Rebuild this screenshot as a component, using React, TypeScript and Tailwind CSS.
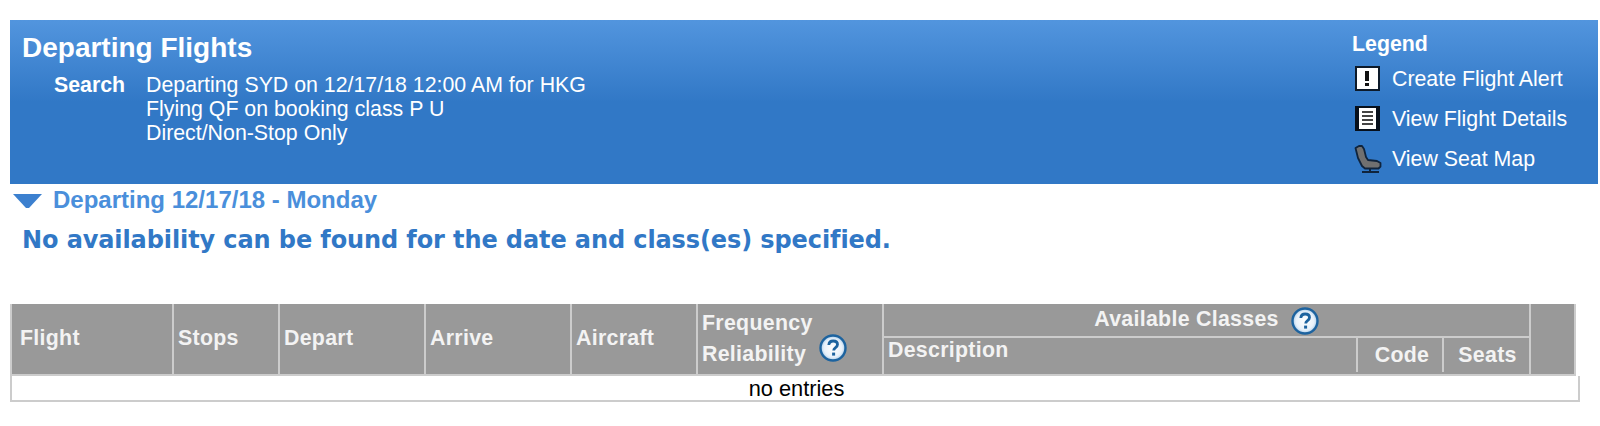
import React from "react";

const Help = ({ className = "" }: { className?: string }) => (
  <svg width="28" height="28" viewBox="0 0 28 28" className={className}>
    <defs>
      <radialGradient id="qh" cx="50%" cy="50%" r="50%">
        <stop offset="0%" stopColor="#ffffff" />
        <stop offset="72%" stopColor="#e8f1fa" />
        <stop offset="100%" stopColor="#a9cbe9" />
      </radialGradient>
    </defs>
    <circle cx="14" cy="14" r="12.5" fill="url(#qh)" stroke="#1d639f" strokeWidth="2.4" />
    <path d="M9.8 11c.2-2.7 2-4 4.4-4 2.500 0 4.300 1.400 4.300 3.600 0 1.700-1 2.500-2.200 3.300-1.100.8-1.600 1.300-1.600 2.600" fill="none" stroke="#1d639f" strokeWidth="2.800" />
    <rect x="13.100" y="18.600" width="3" height="3" fill="#1d639f" />
  </svg>
);

const AlertIcon = () => (
  <svg width="26" height="26" viewBox="0 0 26 26" shapeRendering="crispEdges">
    <rect x="1" y="0" width="25" height="25" fill="#0d1a2a" />
    <rect x="3" y="2" width="21" height="21" fill="#ffffff" />
    <rect x="11" y="5" width="4" height="10" fill="#111111" />
    <rect x="11" y="17" width="4" height="3" fill="#111111" />
  </svg>
);

const DetailsIcon = () => (
  <svg width="26" height="26" viewBox="0 0 26 26" shapeRendering="crispEdges">
    <rect x="1" y="0" width="25" height="25" fill="#07101c" />
    <rect x="5" y="2" width="17" height="21" fill="#ffffff" />
    <rect x="8" y="5" width="11" height="2" fill="#444444" />
    <rect x="8" y="9" width="11" height="2" fill="#444444" />
    <rect x="8" y="13" width="11" height="2" fill="#444444" />
    <rect x="8" y="17" width="11" height="2" fill="#444444" />
  </svg>
);

const SeatIcon = () => (
  <svg width="28" height="28" viewBox="0 0 28 28">
    <path d="M1.500 3 L5 1 L8 1 L10 4 L12 12 L14 15 L23 16 L26.500 18 L26.500 21.500 L24.500 23.500 L11 23.500 L8 21 L4 13 Z" fill="#707070" stroke="#10243c" strokeWidth="1.800" strokeLinejoin="round" />
    <rect x="8" y="26" width="17" height="2" fill="#10243c" />
    <rect x="15" y="24" width="2" height="2" fill="#10243c" />
  </svg>
);

const LegendRow = ({ icon, label }: { icon: React.ReactNode; label: string }) => (
  <div className="flex h-[40px] items-center">
    <div className="flex w-[40px] justify-start pl-[2px]">{icon}</div>
    <span className="text-[21.33px] leading-[24px] text-white">{label}</span>
  </div>
);

const cell = "flex items-center bg-[#999999] text-[21.33px] font-bold tracking-[0.3px] text-[#f3f3f3]";

export default function App() {
  return (
    <div className="min-h-[426px] bg-white pt-[20px] font-['Liberation_Sans',Arial,sans-serif]">
      <header className="ml-[10px] mr-[2px] flex h-[164px] justify-between bg-gradient-to-b from-[#5295de] from-0% to-[#3178c6] to-50% text-white">
        <div className="pl-[12px] pt-[14px]">
          <h1 className="text-[28px] font-bold leading-[28px]">Departing Flights</h1>
          <div className="mt-[11px] flex text-[21.33px] leading-[24px]">
            <div className="w-[124px] pl-[32px] font-bold">Search</div>
            <div>
              <div>Departing SYD on 12/17/18 12:00 AM for HKG</div>
              <div>Flying QF on booking class P U</div>
              <div>Direct/Non-Stop Only</div>
            </div>
          </div>
        </div>
        <div className="w-[246px] pt-[12px]">
          <div className="text-[21.33px] font-bold leading-[24px]">Legend</div>
          <div className="mt-[3px]">
            <LegendRow icon={<AlertIcon />} label="Create Flight Alert" />
            <LegendRow icon={<DetailsIcon />} label="View Flight Details" />
            <LegendRow icon={<SeatIcon />} label="View Seat Map" />
          </div>
        </div>
      </header>

      <div className="ml-[13px] flex h-[32px] items-center">
        <svg width="30" height="16" viewBox="0 0 30 16" className="mt-[2px]">
          <path d="M0 1 H29 L16 15 H13 Z" fill="#3c80cf" />
        </svg>
        <span className="ml-[10px] text-[24px] font-bold text-[#4a8fdb]">Departing 12/17/18 - Monday</span>
      </div>

      <p className="ml-[22px] mt-[9px] font-['DejaVu_Sans',Verdana,sans-serif] text-[24px] font-bold leading-[30px] tracking-[-0.1px] text-[#3178c6]">
        No availability can be found for the date and class(es) specified.
      </p>

      <div className="ml-[10px] mt-[49px] w-[1570px]">
        <div className="grid h-[72px] w-[1566px] grid-cols-[160px_104px_144px_144px_124px_184px_645px_43px] grid-rows-[32px_1fr] gap-x-[2px] gap-y-[2px] border-x-2 border-b-2 border-[#cccccc] bg-[#cccccc]">
          <div className={`${cell} row-span-2 pl-[8px]`}>Flight</div>
          <div className={`${cell} row-span-2 pl-[4px]`}>Stops</div>
          <div className={`${cell} row-span-2 pl-[4px]`}>Depart</div>
          <div className={`${cell} row-span-2 pl-[4px]`}>Arrive</div>
          <div className={`${cell} row-span-2 pl-[4px]`}>Aircraft</div>
          <div className={`${cell} row-span-2 flex-col items-start justify-center pl-[4px] leading-[31px]`}>
            <span>Frequency</span>
            <span className="flex items-center">
              Reliability
              <Help className="ml-[13px] mt-[-14px]" />
            </span>
          </div>
          <div className={`${cell} justify-center`}>
            Available Classes
            <Help className="ml-[12px] mt-[2px]" />
          </div>
          <div className={`${cell} row-span-2`} />
          <div className="flex bg-[#999999] pb-[2px]">
            <div className={`${cell} w-[474px] items-start border-r-2 border-[#cccccc] pl-[4px] leading-[24px]`}>Description</div>
            <div className={`${cell} w-[86px] justify-center border-r-2 border-[#cccccc] pl-[4px] pt-[1px]`}>Code</div>
            <div className={`${cell} flex-1 justify-center pl-[2px] pt-[1px]`}>Seats</div>
          </div>
        </div>
        <div className="flex h-[26px] w-[1570px] items-center justify-center border-x-2 border-b-2 border-[#cccccc] pl-[3px] pt-[2px] text-[21.8px] leading-[24px] text-black">
          no entries
        </div>
      </div>
    </div>
  );
}
